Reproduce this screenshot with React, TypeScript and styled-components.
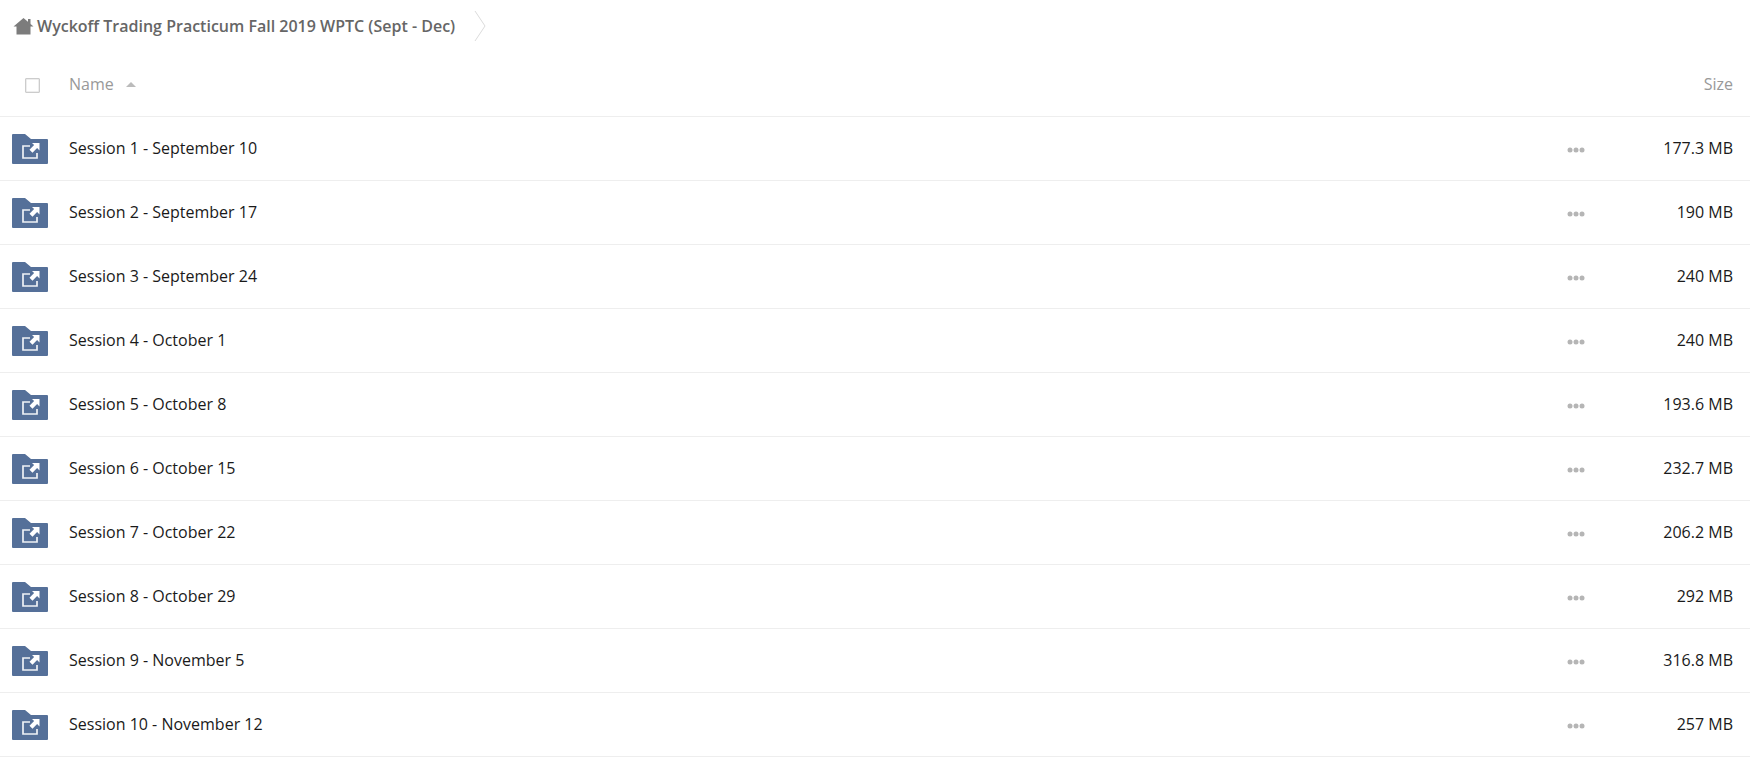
import React from 'react';
import styled, { createGlobalStyle } from 'styled-components';

const sessions = [
  { name: 'Session 1 - September 10', size: '177.3 MB' },
  { name: 'Session 2 - September 17', size: '190 MB' },
  { name: 'Session 3 - September 24', size: '240 MB' },
  { name: 'Session 4 - October 1', size: '240 MB' },
  { name: 'Session 5 - October 8', size: '193.6 MB' },
  { name: 'Session 6 - October 15', size: '232.7 MB' },
  { name: 'Session 7 - October 22', size: '206.2 MB' },
  { name: 'Session 8 - October 29', size: '292 MB' },
  { name: 'Session 9 - November 5', size: '316.8 MB' },
  { name: 'Session 10 - November 12', size: '257 MB' },
];

const GlobalStyle = createGlobalStyle`
  html, body {
    margin: 0;
    padding: 0;
    background: #fff;
    overflow: hidden;
  }
  body {
    font-family: "Open Sans", "Noto Sans", sans-serif;
  }
`;

const Page = styled.div`
  width: 1750px;
  height: 759px;
  overflow: hidden;
`;

const Breadcrumb = styled.div`
  display: flex;
  align-items: center;
  height: 52px;
  padding-left: 13px;
`;

const CrumbText = styled.span`
  margin-left: 3px;
  font-size: 16px;
  font-weight: 600;
  color: #666;
  white-space: nowrap;
`;

const CrumbArrow = styled.svg`
  margin-left: 19px;
`;

const HeaderRow = styled.div`
  display: flex;
  align-items: center;
  height: 65px;
  padding-right: 17px;
  border-bottom: 1px solid #eee;
  box-sizing: border-box;
  color: #999;
  font-size: 16px;
`;

const CheckCell = styled.div`
  width: 69px;
  flex: none;
  display: flex;
  padding-left: 25px;
  box-sizing: border-box;
`;

const Checkbox = styled.span`
  width: 15px;
  height: 15px;
  margin-top: 2px;
  border: 1px solid #ccc;
  box-shadow: inset 0 0 0 0.5px #ddd;
  border-radius: 1px;
  box-sizing: border-box;
`;

const SortArrow = styled.span`
  width: 0;
  height: 0;
  margin-left: 12px;
  border-left: 5px solid transparent;
  border-right: 5px solid transparent;
  border-bottom: 5px solid #bbb;
`;

const SizeHead = styled.span`
  margin-left: auto;
`;

const Row = styled.div`
  display: flex;
  align-items: center;
  height: 64px;
  padding: 0 17px 0 12px;
  border-bottom: 1px solid #eee;
  box-sizing: border-box;
  font-size: 16px;
  color: #1a1a1a;
`;

const IconCell = styled.div`
  width: 57px;
  flex: none;
  display: flex;
`;

const RowName = styled.span`
  flex: 1;
  margin-top: -2px;
`;

const Dots = styled.svg`
  flex: none;
  margin-top: 2px;
`;

const SizeCell = styled.span`
  width: 148px;
  flex: none;
  text-align: right;
  margin-top: -2px;
`;

function FolderIcon() {
  return (
    <svg width="36" height="30" viewBox="0 0 36 30">
      <path d="M0 1a1 1 0 0 1 1-1h12l6 5h16a1 1 0 0 1 1 1v23a1 1 0 0 1-1 1H1a1 1 0 0 1-1-1z" fill="#557099" />
      <path d="M18 12h-7v12h14v-5" fill="none" stroke="#fff" strokeWidth="1.7" opacity="0.9" />
      <path d="M20 9h7.500v7.500l-2.400-2.400-4.600 4.600-3-3 4.600-4.600z" fill="#fff" />
    </svg>
  );
}

function HomeIcon() {
  return (
    <svg width="21" height="18" viewBox="0 0 21 18">
      <path d="M10.500 1 20.500 9.500H17.500V17.500H3.500V9.500H0.500z" fill="#7c7c7c" />
      <rect x="15" y="2" width="2.500" height="5" fill="#7c7c7c" />
    </svg>
  );
}

export default function App() {
  return (
    <Page>
      <GlobalStyle />
      <Breadcrumb>
        <HomeIcon />
        <CrumbText>Wyckoff Trading Practicum Fall 2019 WPTC (Sept - Dec)</CrumbText>
        <CrumbArrow width="12" height="32" viewBox="0 0 12 32">
          <path d="M1 1 11 16 1 31" fill="none" stroke="#dcdcdc" strokeWidth="1" />
        </CrumbArrow>
      </Breadcrumb>
      <HeaderRow>
        <CheckCell>
          <Checkbox />
        </CheckCell>
        <span>Name</span>
        <SortArrow />
        <SizeHead>Size</SizeHead>
      </HeaderRow>
      {sessions.map((s) => (
        <Row key={s.name}>
          <IconCell>
            <FolderIcon />
          </IconCell>
          <RowName>{s.name}</RowName>
          <Dots width="18" height="6" viewBox="0 0 18 6">
            <circle cx="3" cy="3" r="2.500" fill="#b5b5b5" />
            <circle cx="9" cy="3" r="2.500" fill="#b5b5b5" />
            <circle cx="15" cy="3" r="2.500" fill="#b5b5b5" />
          </Dots>
          <SizeCell>{s.size}</SizeCell>
        </Row>
      ))}
    </Page>
  );
}
